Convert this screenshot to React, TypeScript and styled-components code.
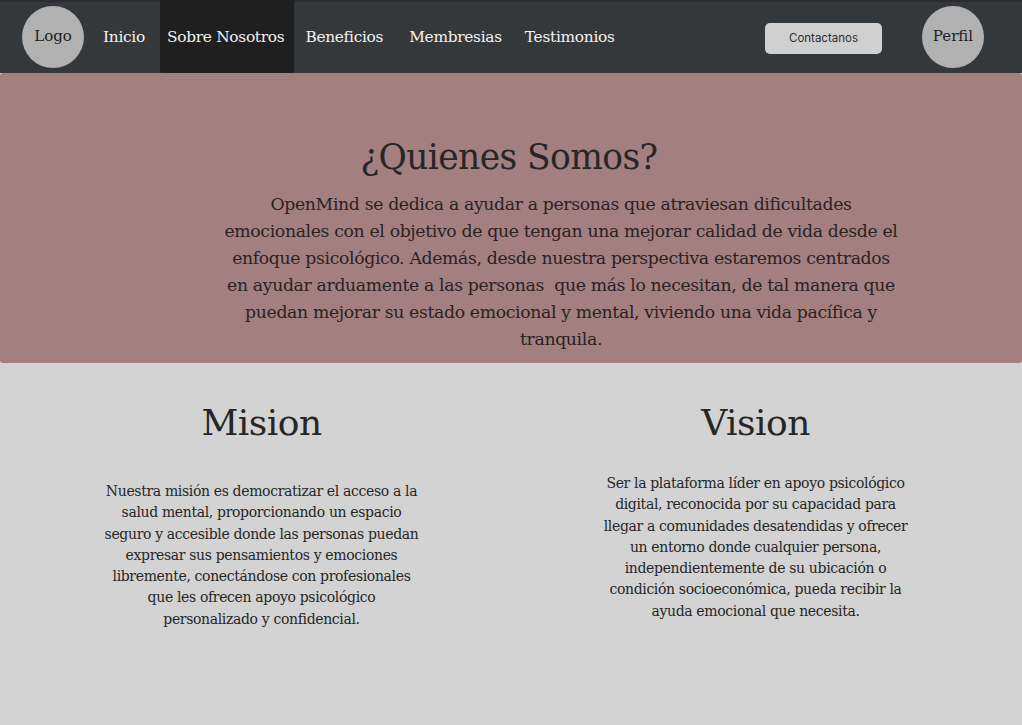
import React from "react";
import styled, { createGlobalStyle } from "styled-components";

const Global = createGlobalStyle`
  html, body { margin: 0; padding: 0; background: #d3d3d3; }
  body { font-family: "DejaVu Serif", "Liberation Serif", serif; }
  #root { min-height: 725px; display: flex; flex-direction: column; }
`;

const Header = styled.header`
  height: 73px;
  flex: none;
  box-sizing: border-box;
  background: #35383b;
  border-top: 2px solid #2a2c2f;
  display: flex;
  align-items: stretch;
  padding: 0 38px 0 22px;
`;

const Circle = styled.div`
  width: 62px;
  height: 62px;
  border-radius: 50%;
  background: #b1b1b1;
  color: #1e1e1e;
  font-size: 15px;
  display: flex;
  align-items: center;
  justify-content: center;
  align-self: center;
  margin-top: -2px;
  padding-bottom: 2px;
  box-sizing: border-box;
`;

const Nav = styled.nav`
  display: flex;
  align-items: stretch;
  margin-left: 12px;
`;

const NavItem = styled.a<{ $active?: boolean; $pad: string }>`
  display: flex;
  align-items: center;
  padding: ${(p) => p.$pad};
  margin-top: -2px;
  color: #f2f2f2;
  font-size: 15.4px;
  letter-spacing: -0.3px;
  background: ${(p) => (p.$active ? "#1f1f1f" : "transparent")};
  border-radius: 0 0 2px 2px;
  text-decoration: none;
  white-space: nowrap;
`;

const Spacer = styled.div`
  flex: 1;
`;

const Contact = styled.button`
  align-self: center;
  width: 117px;
  height: 31px;
  border: none;
  border-radius: 5px;
  background: #d0d0d0;
  color: #2e2e2e;
  font-family: Inter, "Liberation Sans", sans-serif;
  font-size: 11.5px;
  margin-right: 40px;
  margin-top: 1px;
  padding: 0;
`;

const Hero = styled.section`
  height: 290px;
  flex: none;
  background: #a47f80;
  border-radius: 3px;
  display: flex;
  flex-direction: column;
  align-items: center;
  box-sizing: border-box;
  padding-top: 58px;
`;

const HeroTitle = styled.h1`
  margin: 0;
  font-weight: 400;
  font-size: 34.5px;
  line-height: 52px;
  color: #262626;
  letter-spacing: -0.6px;
  transform: translateX(-2px);
`;

const HeroText = styled.p`
  margin: 8px 0 0 100px;
  font-size: 17.25px;
  line-height: 27px;
  text-align: center;
  color: #2a2222;
  letter-spacing: -0.35px;
  white-space: nowrap;
`;

const Columns = styled.section`
  flex: 1;
  display: grid;
  grid-template-columns: 515px 1fr;
  padding-top: 37px;
`;

const Column = styled.div<{ $shift: number }>`
  display: flex;
  flex-direction: column;
  align-items: center;
  transform: translateX(${(p) => p.$shift}px);
`;

const ColTitle = styled.h2`
  margin: 0;
  font-weight: 400;
  font-size: 36px;
  line-height: 46px;
  color: #262626;
  letter-spacing: -0.5px;
`;

const ColText = styled.p<{ $top: number }>`
  margin: ${(p) => p.$top}px 0 0;
  font-size: 14px;
  line-height: 21.3px;
  text-align: center;
  color: #262626;
  letter-spacing: -0.35px;
  white-space: nowrap;
`;

export default function App() {
  return (
    <>
      <Global />
      <Header>
        <Circle>Logo</Circle>
        <Nav>
          <NavItem $pad="0 15px 0 7px">Inicio</NavItem>
          <NavItem $active $pad="0 10px 0 7px">Sobre Nosotros</NavItem>
          <NavItem $pad="0 14px 0 11px">Beneficios</NavItem>
          <NavItem $pad="0 13px 0 12px">Membresias</NavItem>
          <NavItem $pad="0 10px 0 10px">Testimonios</NavItem>
        </Nav>
        <Spacer />
        <Contact>Contactanos</Contact>
        <Circle>Perfil</Circle>
      </Header>
      <Hero>
        <HeroTitle>¿Quienes Somos?</HeroTitle>
        <HeroText>
          OpenMind se dedica a ayudar a personas que atraviesan dificultades
          <br />
          emocionales con el objetivo de que tengan una mejorar calidad de vida desde el
          <br />
          enfoque psicológico. Además, desde nuestra perspectiva estaremos centrados
          <br />
          en ayudar arduamente a las personas&nbsp; que más lo necesitan, de tal manera que
          <br />
          puedan mejorar su estado emocional y mental, viviendo una vida pacífica y
          <br />
          tranquila.
        </HeroText>
      </Hero>
      <Columns>
        <Column $shift={4}>
          <ColTitle>Mision</ColTitle>
          <ColText $top={35}>
            Nuestra misión es democratizar el acceso a la
            <br />
            salud mental, proporcionando un espacio
            <br />
            seguro y accesible donde las personas puedan
            <br />
            expresar sus pensamientos y emociones
            <br />
            libremente, conectándose con profesionales
            <br />
            que les ofrecen apoyo psicológico
            <br />
            personalizado y confidencial.
          </ColText>
        </Column>
        <Column $shift={-13}>
          <ColTitle>Vision</ColTitle>
          <ColText $top={27}>
            Ser la plataforma líder en apoyo psicológico
            <br />
            digital, reconocida por su capacidad para
            <br />
            llegar a comunidades desatendidas y ofrecer
            <br />
            un entorno donde cualquier persona,
            <br />
            independientemente de su ubicación o
            <br />
            condición socioeconómica, pueda recibir la
            <br />
            ayuda emocional que necesita.
          </ColText>
        </Column>
      </Columns>
    </>
  );
}
